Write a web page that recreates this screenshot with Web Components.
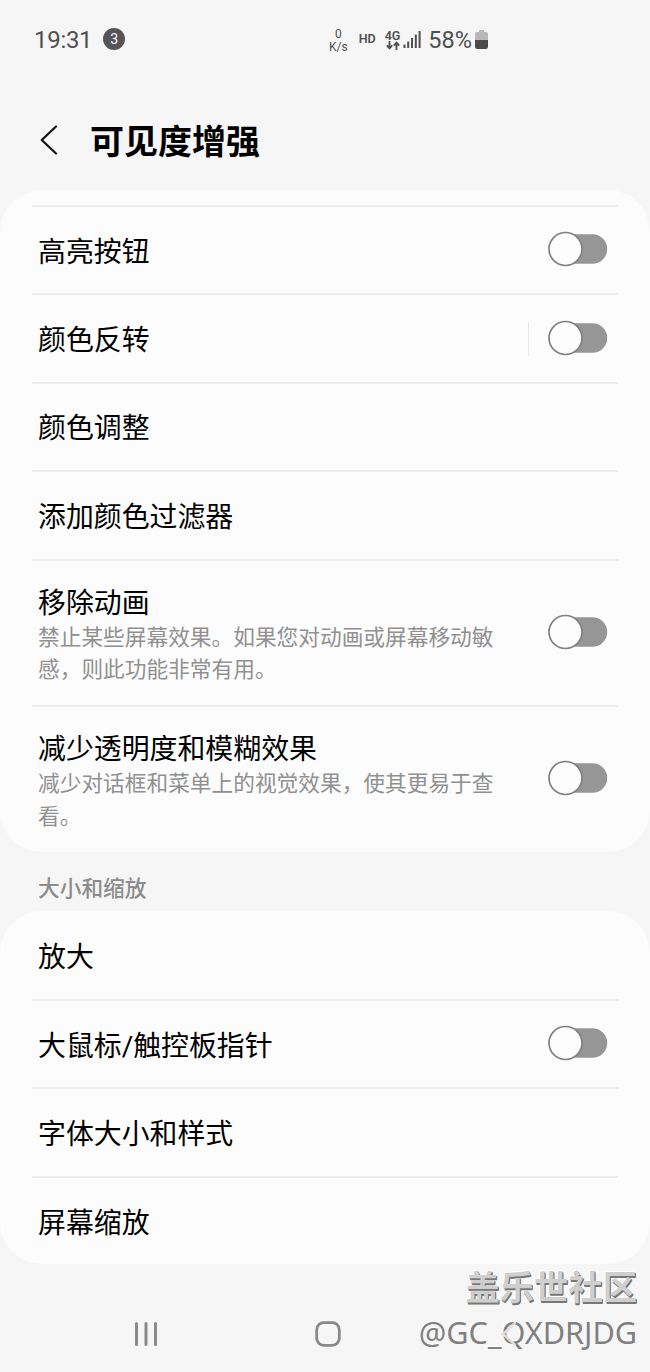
<!DOCTYPE html>
<html lang="zh-CN">
<head>
<meta charset="utf-8">
<title>可见度增强</title>
<style>
body {
  margin: 0;
  background: #f6f6f6;
  font-family: Roboto, "Noto Sans CJK SC", sans-serif;
  color: #000;
}
</style>
</head>
<body>
<settings-screen></settings-screen>

<script>
function define(name, html, setup) {
  const template = document.createElement("template");
  template.innerHTML = html;
  window.customElements.define(name, class extends HTMLElement {
    constructor() {
      super();
      this.attachShadow({ mode: "open" });
      this.shadowRoot.appendChild(template.content.cloneNode(true));
    }
    connectedCallback() {
      if (setup) setup(this, this.shadowRoot);
    }
  });
}

define("status-bar", `
<style>
:host{
  display:flex;
  align-items:center;
  height:80px;
  padding:0 162px 0 34px;
  box-sizing:border-box;
  color:#505050;
}
.time{
  font-size:24px;
  line-height:28px;
  letter-spacing:-.3px;
}
.count{
  display:grid;
  place-items:center;
  width:22px;
  height:22px;
  margin:-2px 0 0 11px;
  border-radius:50%;
  background:#555;
  color:#fff;
  font-size:14px;
}
.right{
  display:flex;
  align-items:center;
  margin-left:auto;
}
.speed{
  text-align:center;
  font-size:12px;
  line-height:10px;
  margin:1px 11px 0 0;
}
.speed div{
  height:10px;
}
.speed div + div{
  margin-top:3px;
}
.hd{
  font-size:12.5px;
  font-weight:600;
  margin:-3px 9px 0 0;
}
.net{
  display:flex;
  flex-direction:column;
  align-items:center;
  font-size:12.5px;
  line-height:11px;
  font-weight:600;
  margin-right:3px;
}
.percent{
  font-size:23.5px;
  line-height:28px;
  margin:-1px 3px 0 7px;
}
svg{
  display:block;
}
.signal,.battery{
  margin-top:-2px;
}
</style>
<span class="time">19:31</span>
<span class="count">3</span>
<div class="right">
  <div class="speed"><div>0</div><div>K/s</div></div>
  <span class="hd">HD</span>
  <div class="net">
    <span>4G</span>
    <svg width="14" height="9" viewBox="0 0 14 9" fill="none" stroke="#505050" stroke-width="1.9">
      <path d="M3.5 0v7M.8 4.3l2.7 3 2.7-3M10.5 9V2M7.8 4.7l2.7-3 2.7 3"/>
    </svg>
  </div>
  <svg class="signal" width="18" height="18" viewBox="0 0 18 18" fill="#505050">
    <path d="M.5 14.5h2V18h-2zM4.2 11.5h2V18h-2zM8 8h2v10H8zM11.8 4.5h2V18h-2zM15.6 1h2v17h-2z"/>
  </svg>
  <span class="percent">58%</span>
  <svg class="battery" width="13" height="19" viewBox="0 0 13 19">
    <path d="M4 0h5v2h2.5q1.5 0 1.5 1.5V10H0V3.5Q0 2 1.5 2H4z" fill="#b9b9b9"/>
    <path d="M0 10h13v6.5q0 2.5-2.5 2.5h-8Q0 19 0 16.5z" fill="#4a4a4a"/>
  </svg>
</div>
`);

define("app-bar", `
<style>
:host{
  display:flex;
  align-items:center;
  height:110px;
  padding:10px 0 0 40px;
  box-sizing:border-box;
}
h1{
  margin:4px 0 0 32px;
  font-size:34px;
  line-height:50px;
  font-weight:700;
}
</style>
<svg width="18" height="30" viewBox="0 0 18 30" fill="none" stroke="#111" stroke-width="2.2" stroke-linecap="round" stroke-linejoin="round">
  <path d="M16 1.5 1.8 15 16 28.5"/>
</svg>
<h1><slot></slot></h1>
`);

define("toggle-switch", `
<style>
:host{
  display:block;
  width:60px;
  height:36px;
  margin-top:-2px;
}
svg{
  display:block;
}
</style>
<svg width="60" height="36" viewBox="0 0 60 36">
  <rect x="8" y="3.2" width="51.2" height="29.6" rx="14.8" fill="#969696"/>
  <circle cx="17.5" cy="18" r="16.5" fill="#fdfdfd" stroke="#818181" stroke-width="1.7"/>
</svg>
`);

define("settings-row", `
<style>
:host{
  display:flex;
  align-items:center;
  box-sizing:border-box;
  height:88.4px;
  margin:0 32px;
  padding:0 10px 0 6px;
  border-top:2px solid #ececec;
}
:host([first]){
  border-top-color:transparent;
}
:host([tall]){
  height:146.3px;
}
.text{
  flex:1;
  padding-top:5px;
}
:host([tall]) .text{
  padding-top:7px;
}
.label{
  font-size:27.9px;
  line-height:36px;
}
.desc{
  width:460px;
  font-size:21.7px;
  line-height:32.5px;
  color:#909090;
}
.desc:empty{
  display:none;
}
.divider{
  width:1px;
  height:34px;
  margin-right:19px;
  background:#e9e9e9;
}
</style>
<div class="text">
  <div class="label"><slot></slot></div>
  <div class="desc"></div>
</div>
`, (host, root) => {
  root.querySelector(".desc").textContent = host.getAttribute("desc") || "";
  if (host.hasAttribute("divided")) {
    const divider = document.createElement("div");
    divider.className = "divider";
    root.appendChild(divider);
  }
  if (host.hasAttribute("toggle")) {
    root.appendChild(document.createElement("toggle-switch"));
  }
});

define("settings-card", `
<style>
:host{
  display:block;
  border-radius:42px;
  background:#fcfcfc;
}
:host([scrolled]){
  padding-top:15px;
  padding-bottom:1px;
}
</style>
<slot></slot>
`);

define("section-title", `
<style>
:host{
  display:flex;
  align-items:center;
  height:58.5px;
  padding:10px 0 0 38px;
  box-sizing:border-box;
  font-size:21.7px;
  font-weight:500;
  color:#8c8c8c;
}
</style>
<slot></slot>
`);

define("nav-bar", `
<style>
:host{
  display:flex;
  align-items:center;
  justify-content:space-between;
  height:106px;
  padding:33px 134px 0 134px;
  box-sizing:border-box;
  /* keeps the back arrow above the watermark */
  position:relative;
  z-index:1;
}
svg{
  display:block;
}
</style>
<svg width="25" height="26" viewBox="0 0 25 26" stroke="#8a8a8a" stroke-width="3" stroke-linecap="round">
  <path d="M2.5 2.5v21M12 2.5v21M21.5 2.5v21"/>
</svg>
<svg width="26" height="26" viewBox="0 0 26 26" fill="none" stroke="#8a8a8a" stroke-width="2.8">
  <rect x="1.7" y="1.7" width="22.6" height="22.6" rx="7"/>
</svg>
<svg width="20" height="26" viewBox="0 0 20 26" fill="none" stroke="#dedede" stroke-width="2.5" stroke-linecap="round">
  <path d="M19 2 7 13l12 11"/>
</svg>
`);

define("water-mark", `
<style>
:host{
  position:absolute;
  right:13px;
  top:1264px;
  text-align:right;
}
.site{
  font-size:34.3px;
  line-height:48px;
  font-weight:700;
  color:#cfcfcf;
  text-shadow:1px 1px 0 #777, 1px 2px 0 #777, -1px -1px 0 #fff;
}
.user{
  font-family:"Noto Sans", "Noto Sans CJK SC", sans-serif;
  font-size:30.6px;
  line-height:40px;
  color:#808080;
  text-shadow:-1px -1px 0 #fff;
}
</style>
<div class="site">盖乐世社区</div>
<div class="user">@GC_QXDRJDG</div>
`);

define("settings-screen", `
<style>
:host{
  display:block;
  position:relative;
  width:650px;
  height:1372px;
  overflow:hidden;
}
</style>
<status-bar></status-bar>
<app-bar>可见度增强</app-bar>
<settings-card scrolled>
  <settings-row toggle>高亮按钮</settings-row>
  <settings-row toggle divided>颜色反转</settings-row>
  <settings-row>颜色调整</settings-row>
  <settings-row>添加颜色过滤器</settings-row>
  <settings-row tall toggle desc="禁止某些屏幕效果。如果您对动画或屏幕移动敏感，则此功能非常有用。">移除动画</settings-row>
  <settings-row tall toggle desc="减少对话框和菜单上的视觉效果，使其更易于查看。">减少透明度和模糊效果</settings-row>
</settings-card>
<section-title>大小和缩放</section-title>
<settings-card>
  <settings-row first>放大</settings-row>
  <settings-row toggle>大鼠标/触控板指针</settings-row>
  <settings-row>字体大小和样式</settings-row>
  <settings-row>屏幕缩放</settings-row>
</settings-card>
<nav-bar></nav-bar>
<water-mark></water-mark>
`);
</script>
</body>
</html>
